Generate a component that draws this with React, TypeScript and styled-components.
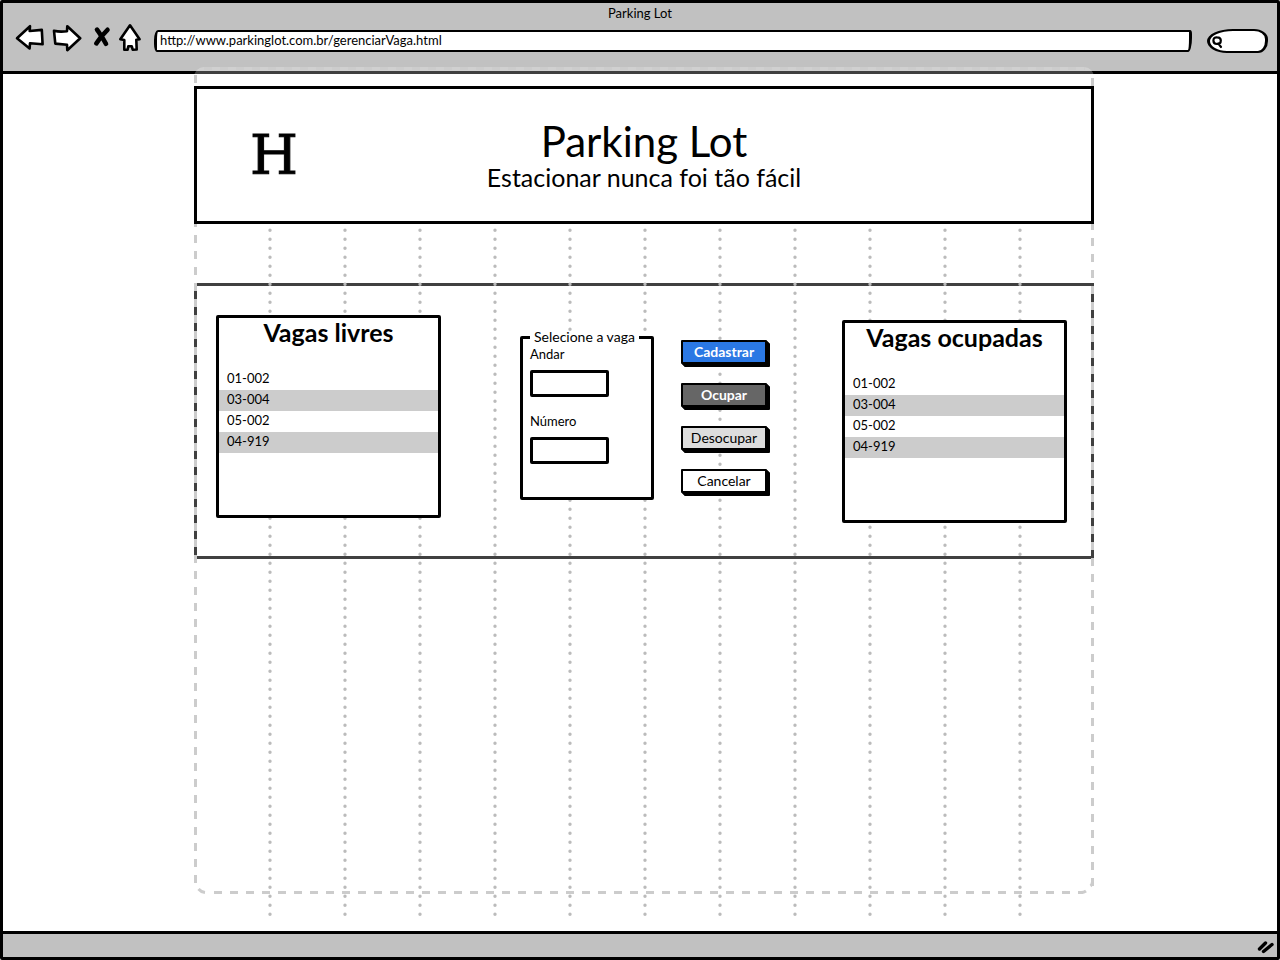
import React from "react";
import styled, { createGlobalStyle } from "styled-components";

const ink = "#000";
const chrome = "#c1c1c1";
const sans = `Lato, "Open Sans", "Liberation Sans", sans-serif`;

const GlobalStyle = createGlobalStyle`
  *, *::before, *::after { box-sizing: border-box; }
  body { margin: 0; background: #fff; color: ${ink}; font: 13px/20px ${sans}; }
  h1, h2, p, ul { margin: 0; padding: 0; }
  button, input { font: inherit; color: inherit; }
`;

const BrowserWindow = styled.div`
  display: flex;
  flex-direction: column;
  min-height: 100vh;
  border: 3px solid ${ink};
  border-radius: 2px;
`;

const TopBar = styled.header`
  height: 71px;
  background: ${chrome};
  border-bottom: 3px solid ${ink};
`;

const WindowTitle = styled.div`
  text-align: center;
  height: 20px;
`;

const Toolbar = styled.div`
  display: flex;
  align-items: center;
  height: 30px;
  padding: 0 9px 0 12px;
`;

const NavButton = styled.button<{ $width: number; $gap: number }>`
  display: block;
  flex: none;
  width: ${(p) => p.$width}px;
  height: 30px;
  margin-right: ${(p) => p.$gap}px;
  padding: 0;
  border: 0;
  background: none;
  svg { display: block; }
`;

const UrlInput = styled.input`
  flex: 1;
  min-width: 0;
  height: 22px;
  margin: 6px 15px 0 0;
  padding: 0 3px 2px;
  border: 2px solid ${ink};
  border-left-width: 3px;
  border-right-width: 3px;
  border-radius: 4px 2px 4px 3px / 10px 4px 14px 8px;
  background: #fff;
`;

const SearchBox = styled.label`
  display: flex;
  align-items: center;
  width: 61px;
  height: 24px;
  margin-top: 6px;
  padding: 2px 0 0 2px;
  border: 2px solid ${ink};
  border-right-width: 3px;
  border-left-width: 3px;
  border-radius: 26px 14px 10px 20px / 12px 10px 12px 12px;
  background: #fff;
`;

const SearchInput = styled.input`
  flex: 1;
  min-width: 0;
  height: 16px;
  border: 0;
  padding: 0;
  background: none;
  outline: none;
`;

const Viewport = styled.div`
  display: flex;
  flex: 1;
  justify-content: center;
  padding-left: 8px;
`;

const Page = styled.main`
  position: relative;
  width: 100%;
  max-width: 900px;
  padding: 12px 0 80px;
`;

const GridOverlay = styled.svg`
  position: absolute;
  z-index: 1;
  top: -7px;
  left: 0;
  width: 100%;
  height: calc(100% - 7px);
  pointer-events: none;
  overflow: visible;
`;

const Banner = styled.section`
  position: relative;
  z-index: 2;
  display: grid;
  grid-template-columns: 154px 1fr 154px;
  align-items: center;
  height: 138px;
  border: 3px solid ${ink};
  background: #fff;
`;

const Logo = styled.div`
  text-align: center;
  font: 55px/56px "DejaVu Serif", serif;
  -webkit-text-stroke: 1px ${ink};
`;

const BannerText = styled.div`
  text-align: center;
`;

const BannerTitle = styled.h1`
  font-size: 42px;
  font-weight: 400;
  line-height: 44px;
`;

const Tagline = styled.p`
  font-size: 25px;
  line-height: 28px;
`;

const Manager = styled.section`
  display: flex;
  align-items: flex-start;
  min-height: 276px;
  margin-top: 59px;
  padding: 29px 24px 32px 19px;
  border: 3px solid ${ink};
`;

const SpotCard = styled.section<{ $top: number }>`
  position: relative;
  z-index: 2;
  flex: none;
  width: 225px;
  height: 203px;
  margin-top: ${(p) => p.$top}px;
  border: 3px solid ${ink};
  border-radius: 2px;
  background: #fff;
`;

const SpotTitle = styled.h2`
  padding-bottom: 23px;
  text-align: center;
  font-size: 25px;
  font-weight: 700;
  line-height: 28px;
`;

const SpotList = styled.ul`
  list-style: none;
`;

const SpotRow = styled.li`
  height: 21px;
  padding-left: 8px;
  line-height: 18px;
  &:nth-child(even) { background: #ccc; }
`;

const SpotForm = styled.form`
  position: relative;
  z-index: 2;
  display: flex;
  flex: 1;
  gap: 27px;
  margin: 12px 0 0 79px;
`;

const Picker = styled.fieldset`
  width: 134px;
  height: 173px;
  min-width: 0;
  margin: 0;
  padding: 0 7px;
  border: 3px solid ${ink};
  border-radius: 2px;
  background: #fff;
`;

const PickerLegend = styled.legend`
  padding: 0 4px;
  font-size: 14px;
  white-space: nowrap;
`;

const Field = styled.label`
  display: block;
  height: 67px;
  line-height: 15px;
`;

const FieldInput = styled.input`
  display: block;
  width: 79px;
  height: 27px;
  margin-top: 8px;
  padding: 0 4px;
  border: 3px solid ${ink};
  border-radius: 2px;
  background: #fff;
`;

const Actions = styled.div`
  display: flex;
  flex-direction: column;
  gap: 19px;
  padding-top: 13px;
`;

const ActionButton = styled.button<{ $face: string; $light?: boolean }>`
  width: 86px;
  height: 24px;
  padding: 0;
  border: 2px solid ${ink};
  border-radius: 1px;
  box-shadow: 1px 1px 0 ${ink}, 2px 2px 0 ${ink}, 3px 3px 0 ${ink};
  background: ${(p) => p.$face};
  color: ${(p) => (p.$light ? "#fff" : ink)};
  font-size: 14px;
  font-weight: ${(p) => (p.$light ? 700 : 400)};
  line-height: 18px;
`;

const StatusBar = styled.footer`
  display: flex;
  align-items: center;
  justify-content: flex-end;
  height: 26px;
  padding-right: 2px;
  border-top: 3px solid ${ink};
  background: ${chrome};
`;

const stroke = { stroke: ink, strokeWidth: 2.6, strokeLinejoin: "round", strokeLinecap: "round" } as const;

const BackIcon = () => (
  <svg width="30" height="30" viewBox="15 22 30 30" aria-hidden="true">
    <path d="M17 37.3 30 25.2 29.7 30 41.8 28.9 42.6 43.2 30 42.3 29.6 47.4Z" fill="#fff" {...stroke} />
  </svg>
);

const ForwardIcon = () => (
  <svg width="30" height="30" viewBox="52 22 30 30" aria-hidden="true">
    <path d="M54 29.8Q60 31.3 67 30.2L67.3 25.2 80.2 37.2 67.3 49.2 67 43.7 55.3 42.6Z" fill="#fff" {...stroke} />
  </svg>
);

const StopIcon = () => (
  <svg width="18" height="30" viewBox="93 22 18 30" aria-hidden="true">
    <path d="M97 28.6Q101 34 106 42.8M107.5 28.8Q101 35 96.3 42.4" fill="none" stroke={ink} strokeWidth="4.6" strokeLinecap="round" />
  </svg>
);

const HomeIcon = () => (
  <svg width="24" height="30" viewBox="118 22 24 30" aria-hidden="true">
    <path d="M130 24.3 139.6 38.2 136.3 38.7 136.7 48.5 132.7 48.7 131.7 45.2 128.3 45.2 127.6 48.8 124.3 48.7 124.3 39 120.3 38.3Z" fill="#fff" {...stroke} />
  </svg>
);

const SearchIcon = () => (
  <svg width="11" height="14" viewBox="0 0 11 14" aria-hidden="true">
    <path d="M5.2 2.3C3 2.1 1.4 3.2 1.4 5.6S3 9 5 9 8.8 7.8 8.8 5.4 7.4 2.4 5.2 2.3ZM6.2 8.4 9 12" fill="none" stroke={ink} strokeWidth="2.2" strokeLinecap="round" />
  </svg>
);

const ResizeGrip = () => (
  <svg width="18" height="16" viewBox="0 0 18 16" aria-hidden="true">
    <path d="M2.5 11 8.5 5M6.5 13.5 15 6.5" fill="none" stroke={ink} strokeWidth="3.4" strokeLinecap="round" />
  </svg>
);

const columnLines = Array.from({ length: 11 }, (_, i) => `${((i + 1) * 100) / 12}%`);

const ColumnGrid = () => (
  <GridOverlay aria-hidden="true">
    <rect width="100%" rx="10" fill="#fff" fillOpacity=".25" style={{ height: "calc(100% - 24px)" }} />
    <g stroke="#bbb" strokeWidth="3.4" strokeLinecap="round" strokeDasharray="0 9" transform="translate(1 0)">
      {columnLines.map((x) => (
        <line key={x} x1={x} x2={x} y1="28.2" y2="100%" />
      ))}
    </g>
    <g stroke="#ccc" strokeWidth="3" fill="none">
      <line x1="10" x2="99%" y1="1.5" y2="1.5" strokeDasharray="8 8" />
      <svg height="100%" width="100%" overflow="visible">
        <line x1="1.5" x2="1.5" y1="8" y2="96.6%" strokeDasharray="8 8" />
      </svg>
      <svg x="100%" overflow="visible" height="100%">
        <line x1="-1.5" x2="-1.5" y1="11" y2="96.6%" strokeDasharray="8 8" />
      </svg>
      <svg y="100%" overflow="visible">
        <line x1="20" x2="98.8%" y1="-24.5" y2="-24.5" strokeDasharray="8 8" />
        <path d="M4.5-28Q7-25 11-24.5" />
      </svg>
      <svg x="100%" y="100%" overflow="visible">
        <path d="M-1.5-39V-35Q-2-32-3.5-31M-13-24.5Q-10-24.5-8-26" />
      </svg>
    </g>
  </GridOverlay>
);

const spots = ["01-002", "03-004", "05-002", "04-919"];

const SpotPanel = ({ title, top }: { title: string; top: number }) => (
  <SpotCard $top={top}>
    <SpotTitle>{title}</SpotTitle>
    <SpotList>
      {spots.map((spot) => (
        <SpotRow key={spot}>{spot}</SpotRow>
      ))}
    </SpotList>
  </SpotCard>
);

export default function App() {
  return (
    <>
      <GlobalStyle />
      <BrowserWindow>
        <TopBar>
          <WindowTitle>Parking Lot</WindowTitle>
          <Toolbar>
            <NavButton $width={30} $gap={7} aria-label="Voltar"><BackIcon /></NavButton>
            <NavButton $width={30} $gap={11} aria-label="Avançar"><ForwardIcon /></NavButton>
            <NavButton $width={18} $gap={7} aria-label="Parar"><StopIcon /></NavButton>
            <NavButton $width={24} $gap={12} aria-label="Início"><HomeIcon /></NavButton>
            <UrlInput aria-label="Endereço" defaultValue="http://www.parkinglot.com.br/gerenciarVaga.html" />
            <SearchBox>
              <SearchIcon />
              <SearchInput type="text" aria-label="Buscar" />
            </SearchBox>
          </Toolbar>
        </TopBar>
        <Viewport>
          <Page>
            <ColumnGrid />
            <Banner>
              <Logo>H</Logo>
              <BannerText>
                <BannerTitle>Parking Lot</BannerTitle>
                <Tagline>Estacionar nunca foi tão fácil</Tagline>
              </BannerText>
            </Banner>
            <Manager>
              <SpotPanel title="Vagas livres" top={0} />
              <SpotForm onSubmit={(e) => e.preventDefault()}>
                <Picker>
                  <PickerLegend>Selecione a vaga</PickerLegend>
                  <Field>
                    Andar
                    <FieldInput type="text" />
                  </Field>
                  <Field>
                    Número
                    <FieldInput type="text" />
                  </Field>
                </Picker>
                <Actions>
                  <ActionButton type="submit" $face="#2b78e4" $light>Cadastrar</ActionButton>
                  <ActionButton type="button" $face="#666" $light>Ocupar</ActionButton>
                  <ActionButton type="button" $face="#ddd">Desocupar</ActionButton>
                  <ActionButton type="button" $face="#fff">Cancelar</ActionButton>
                </Actions>
              </SpotForm>
              <SpotPanel title="Vagas ocupadas" top={5} />
            </Manager>
          </Page>
        </Viewport>
        <StatusBar>
          <ResizeGrip />
        </StatusBar>
      </BrowserWindow>
    </>
  );
}
